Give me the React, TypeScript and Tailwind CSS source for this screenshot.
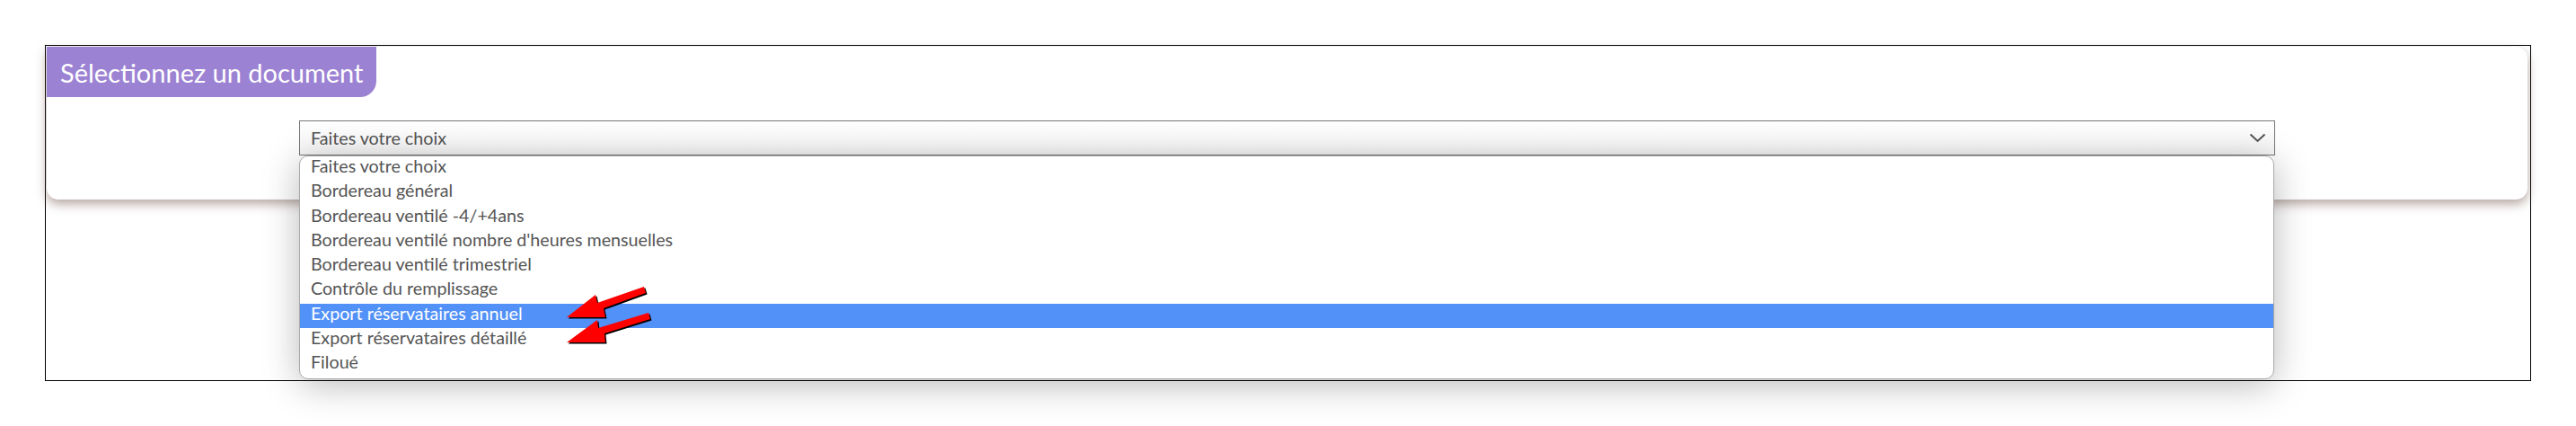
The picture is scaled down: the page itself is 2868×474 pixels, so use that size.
import React from 'react';

const options = [
  'Faites votre choix',
  'Bordereau général',
  'Bordereau ventilé -4/+4ans',
  "Bordereau ventilé nombre d'heures mensuelles",
  'Bordereau ventilé trimestriel',
  'Contrôle du remplissage',
  'Export réservataires annuel',
  'Export réservataires détaillé',
  'Filoué',
];

const Arrows: React.FC = () => (
  <svg className="absolute left-[570px] top-[250px] z-20" width="120" height="100" viewBox="0 0 120 100">
    {/* black drop shadow under each arrow */}
    <g transform="translate(1.5 1.5)" fill="#000">
      <polygon points="10,52 42,27 44,36 96,18 98,25 51,42 53,52" />
      <polygon points="10,80 44,55 45,64 101,47 103,54 52,70 53,80" />
    </g>
    <g fill="#ff0000">
      <polygon points="10,52 42,27 44,36 96,18 98,25 51,42 53,52" />
      <polygon points="10,80 44,55 45,64 101,47 103,54 52,70 53,80" />
    </g>
  </svg>
);

const App: React.FC = () => {
  const selected = 6;

  return (
    <div className="min-h-screen bg-white pt-[50px] pl-[50px] font-['Lato','Noto_Sans',sans-serif]">
      <div className="relative w-[2768px] h-[374px] border border-black">
        {/* Card */}
        <div className="mt-px ml-px mr-[3px] h-[170px] bg-white rounded-[13px] rounded-tl-none shadow-[0_5px_12px_rgba(110,80,70,0.5)]">
          <div className="inline-flex items-center h-[56px] pl-[15px] w-[367px] bg-[#9c82d3] rounded-br-[18px]">
            <span className="text-white text-[29px] leading-none">Sélectionnez un document</span>
          </div>

          <div className="relative w-[2200px] mx-auto mt-[26px]">
            <div className="flex items-center justify-between h-[39px] pl-[12px] pr-[8px] border border-[#767676] bg-gradient-to-b from-white to-[#f6f6f6]">
              <span className="text-[19.7px] text-[#555] leading-none">Faites votre choix</span>
              <svg width="19" height="11" viewBox="0 0 19 11" className="mr-[1px]">
                <path d="M1.5 1.5 L9.5 9 L17.5 1.5" fill="none" stroke="#555" strokeWidth="2" />
              </svg>
            </div>

            {/* Open option list */}
            <ul className="absolute left-0 right-[1px] top-full z-10 bg-white border border-[#a8a8a8] rounded-[10px] overflow-hidden shadow-[0_6px_40px_rgba(0,0,0,0.28)] pb-[2px]">
              {options.map((label, i) => (
                <li
                  key={label}
                  className={
                    i === selected
                      ? 'h-[27.25px] pl-[12px] pt-px text-[19.7px] leading-none text-white bg-[#5291f8]'
                      : 'h-[27.25px] pl-[12px] pt-px text-[19.7px] leading-none text-[#555]'
                  }
                >
                  {label}
                </li>
              ))}
            </ul>
          </div>
        </div>

        <Arrows />
      </div>
    </div>
  );
};

export default App;
